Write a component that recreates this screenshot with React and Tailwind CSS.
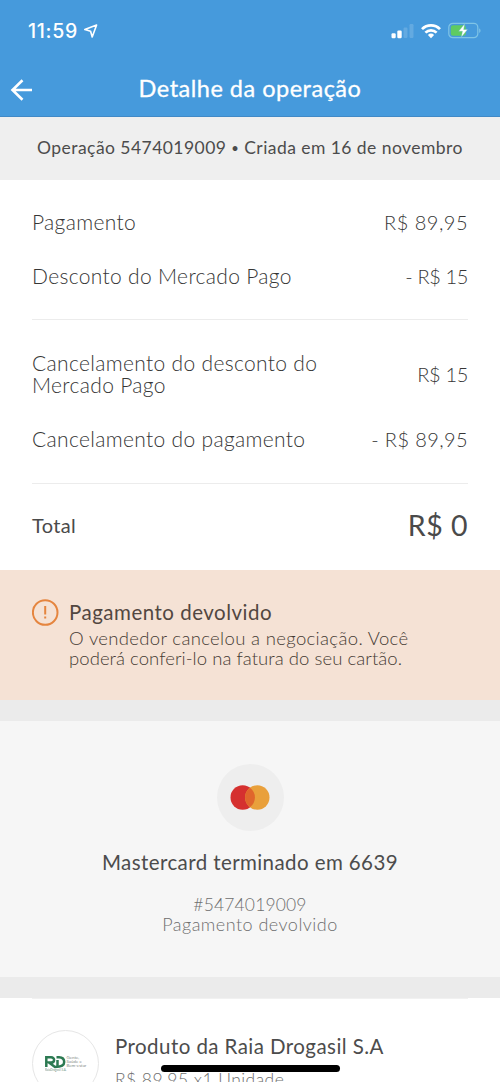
const FONT = "font-['Lato','Open_Sans',sans-serif]";

function StatusBar() {
  return (
    <div className="flex h-[61px] items-center justify-between pl-7 pr-[19px]">
      <div className="flex items-center gap-[5px] font-['Inter',sans-serif] text-[19.5px] font-medium leading-6 tracking-[0.7px]">
        <span>11:59</span>
        <svg width="16" height="16" viewBox="0 0 16 16" fill="none">
          <path d="M13.6 2 L1.8 6.6 L7.6 8.2 L9.2 14 Z" stroke="white" strokeWidth="1.6" strokeLinejoin="round" />
        </svg>
      </div>
      <div className="flex items-center gap-[7px]">
        <svg width="23" height="16" viewBox="0 0 23 16" fill="white">
          <rect x="0.5" y="10.3" width="4.2" height="5" rx="1.2" />
          <rect x="6.3" y="7.5" width="4.4" height="7.8" rx="1.2" />
          <rect x="12.5" y="4.5" width="4" height="10.5" rx="1.2" opacity="0.16" />
          <rect x="18.5" y="1" width="4" height="14" rx="1.2" opacity="0.16" />
        </svg>
        <svg width="20" height="16" viewBox="0 0 20 16" fill="none" stroke="white" strokeWidth="2.7">
          <path d="M1 6.1 A12.6 12.6 0 0 1 19 6.1" />
          <path d="M4.4 9.6 A8 8 0 0 1 15.6 9.6" />
          <path d="M6.9 11.9 A4.4 4.4 0 0 1 13.1 11.9 L10 15.2 Z" fill="white" stroke="none" />
        </svg>
        <svg width="33" height="17" viewBox="0 0 33 17" fill="none">
          <rect x="0.8" y="1.3" width="29" height="14.4" rx="4" stroke="#7fc4e6" strokeWidth="1.2" />
          <rect x="2.8" y="3.2" width="15" height="10.6" rx="2.3" fill="#5fcb62" />
          <path d="M31.2 6.2 v4.8 c1.8-.8 1.8-4 0-4.8Z" fill="#7fc4e6" />
          <path d="M16.7 1.8 L10.6 9.3 H14.4 L13.3 15.2 L19.6 7.5 H15.7 Z" fill="white" stroke="#5fb9b0" strokeWidth="0.4" />
        </svg>
      </div>
    </div>
  );
}

function Header() {
  return (
    <header className="h-[117px] border-b border-[#4189c6] bg-[#469adc] text-white">
      <StatusBar />
      <div className="grid h-[53px] grid-cols-[40px_1fr_40px] items-center">
        <svg className="ml-[10px] mt-1" width="24" height="24" viewBox="0 0 24 24" fill="none" stroke="white" strokeWidth="2.6">
          <path d="M22 12 H2.5 M12.5 2.2 L2.5 12 L12.5 21.8" />
        </svg>
        <h1 className="whitespace-nowrap text-center text-[23.5px] leading-7 tracking-[0.5px] [-webkit-text-stroke:0.3px_white]">
          Detalhe da operação
        </h1>
      </div>
    </header>
  );
}

function Row({ label, value, className, valueClass }) {
  return (
    <div className={`flex items-center justify-between ${className}`}>
      <span className="whitespace-pre-line">{label}</span>
      <span className={`whitespace-nowrap text-[20px] ${valueClass}`}>{value}</span>
    </div>
  );
}

function Summary() {
  return (
    <section className="h-[390px] bg-white px-8 pt-[31px] text-[21px] font-light leading-[22px] tracking-[0.33px] text-[#363636]">
      <Row className="h-[22px]" label="Pagamento" value="R$ 89,95" valueClass="tracking-[0.5px]" />
      <Row className="mt-8 h-[22px]" label="Desconto do Mercado Pago" value="- R$ 15" valueClass="tracking-[-0.35px]" />
      <hr className="mt-8 border-[#ececec]" />
      <Row
        className="mt-8 h-11"
        label={"Cancelamento do desconto do\nMercado Pago"}
        value="R$ 15"
        valueClass="tracking-[-0.3px]"
      />
      <Row className="mt-8 h-[22px]" label="Cancelamento do pagamento" value="- R$ 89,95" valueClass="tracking-[0.4px]" />
      <hr className="mt-[33px] border-[#ececec]" />
      <div className="mt-[25px] flex h-8 items-center justify-between font-normal text-[#4a4a4a]">
        <span className="text-[20px]">Total</span>
        <span className="text-[28.5px] leading-8 tracking-[0.5px]">R$ 0</span>
      </div>
    </section>
  );
}

function RefundNotice() {
  return (
    <section className="flex h-[130px] bg-[#f5e2d5] px-8 pt-[29px]">
      <svg className="shrink-0" width="27" height="27" viewBox="0 0 27 27" fill="none" stroke="#e5853f" strokeWidth="2">
        <circle cx="13.2" cy="13.5" r="12.3" />
        <path d="M13.2 7 v8.6 M13.2 17.6 v2" />
      </svg>
      <div className="ml-[10px] whitespace-nowrap">
        <h2 className="-mt-px text-[20.5px] leading-7 tracking-[0.5px] text-[#524741]">Pagamento devolvido</h2>
        <div className="mt-[2px] text-[18.5px] font-light leading-5 text-[#463b34]">
          <p className="tracking-[0.34px]">O vendedor cancelou a negociação. Você</p>
          <p className="tracking-[0.06px]">poderá conferi-lo na fatura do seu cartão.</p>
        </div>
      </div>
    </section>
  );
}

function CardInfo() {
  return (
    <section className="flex h-64 flex-col items-center bg-[#f6f6f6] pt-[43px] text-center">
      <div className="flex size-[67px] items-center justify-center rounded-full bg-[#eeeeee]">
        <svg width="40" height="26" viewBox="0 0 40 26">
          <circle cx="12.7" cy="12.5" r="12.2" fill="#d5302f" />
          <circle cx="27.3" cy="12.5" r="12.2" fill="#e9a03b" />
          <path d="M20 2.7 A12.2 12.2 0 0 1 20 22.3 A12.2 12.2 0 0 1 20 2.7Z" fill="#e0662c" />
        </svg>
      </div>
      <h2 className="mt-[17px] text-[20.5px] leading-7 tracking-[0.41px] text-[#4c4c4c]">Mastercard terminado em 6639</h2>
      <p className="mt-[19px] text-[17.5px] font-light leading-5 tracking-[0.15px] text-[#6e6e6e]">#5474019009</p>
      <p className="-mt-px text-[18px] font-light leading-5 tracking-[0.48px] text-[#6e6e6e]">Pagamento devolvido</p>
    </section>
  );
}

function Seller() {
  return (
    <section className="h-[84px] overflow-hidden bg-white px-8">
      <hr className="border-[#f1f1f1]" />
      <div className="flex pt-[31px]">
        <div className="flex size-[67px] shrink-0 items-center justify-center rounded-full border border-[#e6e6e6]">
          <svg width="42" height="17" viewBox="0 0 42 17" fill="none">
            <g stroke="#2c7a52" strokeWidth="2.5">
              <path d="M1.3 12 V2.2 H6 C10.2 2.2 10 7.6 6 7.6 H4 L10 12 C15 12 19.2 11 19.2 7 C19.2 3.6 17 2.2 14 2.2 H11.5" />
              <path d="M12.5 5 V12" />
            </g>
            <g className="font-['Lato',sans-serif]" fill="#7f8a84" fontSize="4.4">
              <text x="21.5" y="4">Gente,</text>
              <text x="21.5" y="8">Saúde e</text>
              <text x="21.5" y="12">Bem-estar</text>
            </g>
            <text x="0" y="15.6" className="font-['Lato',sans-serif]" fill="#6f917e" fontSize="2.9">RaiaDrogasil S.A.</text>
          </svg>
        </div>
        <div className="ml-4 whitespace-nowrap">
          <h2 className="mt-[2px] text-[20.5px] leading-7 tracking-[0.44px] text-[#4c4c4c]">Produto da Raia Drogasil S.A</h2>
          <p className="mt-[6px] text-[17.5px] font-light leading-7 tracking-[0.45px] text-[#6e6e6e]">R$ 89,95 x1 Unidade</p>
        </div>
      </div>
    </section>
  );
}

export default function App() {
  return (
    <main className={`relative h-[1082px] w-[500px] overflow-hidden bg-white ${FONT}`}>
      <Header />
      <div className="flex h-[63px] items-center justify-center whitespace-pre bg-[#efefef] text-[17.5px] tracking-[0.45px] text-[#4c4c4c]">
        Operação 5474019009 <span className="text-[13px]">•</span> Criada em 16 de novembro
      </div>
      <Summary />
      <RefundNotice />
      <div className="h-[21px] bg-[#ebebeb]" />
      <CardInfo />
      <div className="h-[21px] bg-[#ebebeb]" />
      <Seller />
      {/* iOS home indicator */}
      <div className="absolute bottom-[10px] left-[161px] h-[7px] w-[179px] rounded-full bg-black" />
    </main>
  );
}
